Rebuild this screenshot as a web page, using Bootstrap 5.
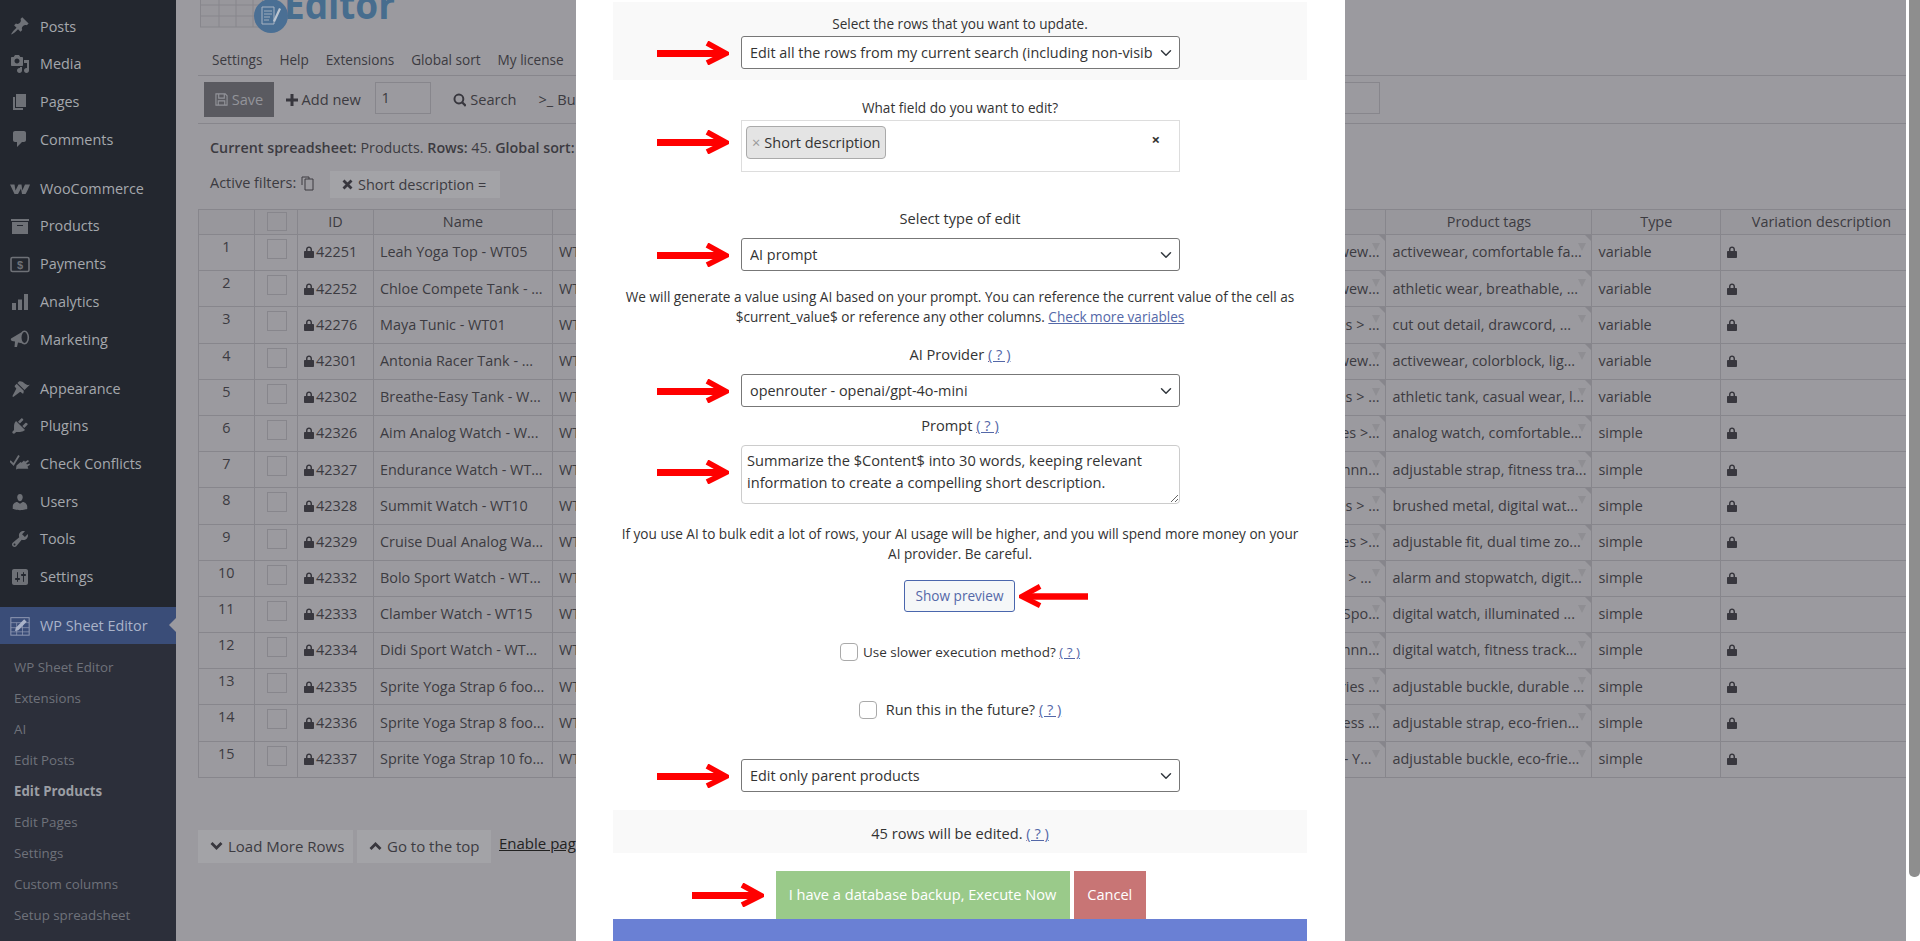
<!DOCTYPE html>
<html lang="en">
<head>
  <meta charset="UTF-8" />
  <title>WP Sheet Editor – Edit Products</title>
  <link href="https://cdn.jsdelivr.net/npm/bootstrap@5.3.0/dist/css/bootstrap.min.css" rel="stylesheet">
  <style>
    body { margin:0; overflow:hidden; font-family:"Open Sans",sans-serif; font-size:14px; color:#3c3b41; background:#fff; }
    .app-shell { height:941px; position:relative; overflow:hidden; }

    /* admin sidebar */
    .wp-side { width:176px; flex:none; background:#23272f; color:#a5a8ad; display:flex; flex-direction:column; }
    .wp-top { padding-top:7.5px; }
    .wp-item { height:37.7px; display:flex; align-items:center; font-size:14.4px; padding-left:10px; white-space:nowrap; }
    .wp-item svg { width:20px; height:20px; flex:none; margin-right:10px; fill:#6e7177; }
    .wp-gap { height:11.5px; }
    .wp-active { background:#3a4d78; color:#aab3c9; position:relative; height:37px; }
    .wp-active::after { content:""; position:absolute; right:0; top:11px; border:7px solid transparent; border-right-color:#9b9a9f; border-left:0; }
    .wp-sub { background:#2c2f3a; flex:1; padding-top:7.5px; }
    .wp-sub a { display:block; height:31px; line-height:31px; padding-left:14px; font-size:13.3px; color:#6f727a; text-decoration:none; }
    .wp-sub a.is-current { color:#9b9ea4; font-weight:700; }

    /* sheet page behind the modal */
    .sheet-page { flex:1; min-width:0; background:#9b9a9f; padding-left:22px; overflow:hidden; }
    .logo-strip { height:40px; display:block; }
    .sheet-menu { height:36px; border-bottom:1px solid #87868c; padding:6px 0 0 14px; gap:17px; display:flex; align-items:center; font-size:13.6px; }
    .sheet-tools { height:48px; border-bottom:1px solid #87868c; padding-left:6px; display:flex; align-items:flex-start; padding-top:6px; white-space:nowrap; font-size:14.6px; }
    .btn-save { width:70px; height:35px; background:#5a5a60; color:#93949a; gap:4px; }
    .btn-save svg { width:13px; height:13px; }
    .tool-link { height:35px; gap:4px; display:flex; align-items:center; flex:none; }
    .tool-add { width:77px; margin-left:11.5px; }
    .tool-search { width:64px; }
    .tool-bulk { width:100px; margin-left:22px; }
    .tool-num { width:56px; height:32px; border:1px solid #87868c; padding:0 6px; line-height:28px; margin:0 22px 0 12px; flex:none; }
    .tool-wide { width:412px; height:32px; border:1px solid #87868c; margin-left:329px; flex:none; }
    .sheet-meta { margin:14px 0 0 12px; height:20px; line-height:20px; white-space:nowrap; font-size:14.3px; }
    .sheet-filter { margin:13px 0 0 12px; height:27px; white-space:nowrap; font-size:14.5px; }
    .filter-copy { width:120px; flex:none; margin-top:-4px; }
    .filter-chip { width:170px; height:27px; background:#a3a3a7; padding-left:12px; gap:5px; flex:none; }
    .sheet-grid { margin-top:11px; width:1708px; table-layout:fixed; --bs-table-bg:transparent; --bs-table-color:#3c3b41; --bs-table-border-color:#87868c; margin-bottom:0; font-size:14.4px; }
    .sheet-grid th { font-weight:400; text-align:center; padding:0; height:25px; line-height:1; vertical-align:middle; background:#98979c; }
    .sheet-grid th.th-var { padding-left:16px; }
    .sheet-grid td { height:36.2px; padding:0 6px; vertical-align:middle; white-space:nowrap; overflow:hidden; position:relative; line-height:1; }
    .sheet-grid td.row-num { text-align:center; vertical-align:top; padding-top:5px; }
    .sheet-grid td.row-check { vertical-align:top; padding:4px 0 0 12px; }
    .fake-check { display:block; width:20px; height:20px; border:1px solid #87868c; }
    .sheet-grid th .fake-check { margin:-1px 0 0 12px; height:19px; }
    .lock { width:10px; height:12px; fill:#38373e; margin-right:2px; vertical-align:-1px; }
    .has-drop::before { content:""; position:absolute; top:0; right:0; border-top:6px solid #87868c; border-left:6px solid transparent; }
    .has-drop::after { content:""; position:absolute; top:8px; right:5px; border-top:8px solid #8f8e93; border-left:4.5px solid transparent; border-right:4.5px solid transparent; }
    .cat-cell { text-align:right; }
    .tail-short { padding-right:14px !important; }
    .sheet-foot { margin-top:52px; gap:4px; white-space:nowrap; font-size:15px; }
    .foot-btn { height:33px; background:#a3a3a7; padding-left:12px; gap:5px; }
    .foot-load { width:155px; }
    .foot-top { width:134px; }
    .foot-link { color:#222; text-decoration:underline; margin:-6px 0 0 4px; align-self:center; }
    .scroll-strip { width:14px; flex:none; padding-left:3px; background:#fff; }
    .scroll-thumb { height:877px; background:#8e8e8e; border-radius:0 0 5px 5px; }

    /* bulk edit modal */
    .edit-modal { position:absolute; left:576px; top:0; bottom:0; width:769px; background:#fff; padding:2px 38px 0 37px; overflow:hidden; color:#333; text-align:center; font-size:13.6px; line-height:20px; }
    .edit-modal a { color:#5468a8; }
    .text-big { font-size:14.6px; }
    .grey-panel { background:#f9f9f9; }
    .panel-top { height:78px; padding-top:12px; }
    .panel-count { height:43px; padding-top:13px; margin-top:18px; }
    .field-row { display:flex; align-items:center; padding-left:44px; gap:12px; text-align:left; }
    .red-arrow { width:72px; height:24px; flex:none; }
    .arrow-top { align-self:flex-start; margin-top:10px; }
    .arrow-up { margin-top:-6px; }
    .edit-modal .form-select { width:439px; height:33px; padding:0 26px 0 8px; font-size:14.4px; line-height:31px; color:#333; border-color:#777; border-radius:3px; background-position:right 5px center; box-shadow:none; }
    .select-multi { width:439px; height:52px; border:1px solid #ddd; padding:5px 4px; position:relative; }
    .multi-chip { width:140px; height:33px; background:#e4e4e4; border:1px solid #aaa; border-radius:4px; padding-left:5px; font-size:14.5px; gap:4px; color:#333; white-space:nowrap; }
    .multi-chip span { color:#999; }
    .multi-clear { position:absolute; right:19px; top:8px; font-weight:700; font-size:15px; }
    .prompt-box { width:439px; height:59px; font-size:14.6px; line-height:22px; padding:3px 5px; color:#333; border-color:#ccc; border-radius:4px; }
    .mt-18 { margin-top:18px; } .mt-36 { margin-top:36px; } .mt-10 { margin-top:10px; } .mt-2px { margin-top:2px; }
    .mt-16 { margin-top:16px; } .mt-17 { margin-top:17px; } .mt-8 { margin-top:8px; }
    .mt-20 { margin-top:20px; } .mt-30 { margin-top:30px; } .mt-38 { margin-top:38px; } .mt-39 { margin-top:39px; }
    .preview-row { display:flex; align-items:center; padding-left:291px; gap:4px; }
    .btn-preview { width:111px; height:32px; padding:0; font-size:13.6px; color:#5468a8; background:#f5f7f8; border:1px solid #4a66ad; border-radius:3px; flex:none; }
    .preview-row .red-arrow { width:69px; transform:scaleX(-1); }
    .check-line { display:flex; align-items:center; height:20px; justify-content:center; }
    .check-line .form-check-input { width:18px; height:18px; margin:0; border-color:#aaa; border-radius:4px; flex:none; }
    .line-a { gap:5px; font-size:13.5px; }
    .line-b { gap:9px; font-size:14.5px; }
    .action-row { display:flex; padding-left:78.5px; gap:12px; margin-top:18px; align-items:center; height:48px; }
    .action-row .btn { height:48px; border:0; border-radius:0; color:#fff; font-size:14.6px; padding:0; flex:none; }
    .btn-run { width:294px; background:#9aca8a; margin-right:-7.5px; }
    .btn-stop { width:71.500px; background:#c87575; }
    .blue-foot { height:30px; background:#6a80d4; }
  </style>
</head>
<body>
  <svg width="0" height="0" class="position-absolute">
    <symbol id="i-lock" viewBox="0 0 10 12"><path d="M2 5V3.400C2 1.600 3.300.5 5 .5s3 1.100 3 2.900V5h1.200c.4 0 .8.4.8.8v5.400c0 .4-.4.8-.8.8H.8c-.4 0-.8-.4-.8-.8V5.800c0-.4.4-.8.8-.8zm1.500 0h3V3.500C6.500 2.500 5.900 2 5 2s-1.500.5-1.500 1.500z"/></symbol>
    <symbol id="i-arrow" viewBox="0 0 72 24"><path d="M0 9h64v7H0z" fill="#f00"/><path d="M50 2l19 10.500L50 22" fill="none" stroke="#f00" stroke-width="5.500"/></symbol>
  </svg>

  <div class="app-shell d-flex">
    <aside class="wp-side">
      <div class="wp-top">
        <div class="wp-item"><svg viewBox="0 0 20 20"><path d="M10.44 3.02l1.82-1.82 6.36 6.35-1.830 1.820c-1.050-.68-2.480-.57-3.410.36l-.75.75c-.92.93-1.040 2.350-.35 3.410l-1.830 1.820-2.410-2.410-2.800 2.790c-.42.42-3.380 2.710-3.800 2.290s1.860-3.390 2.280-3.810l2.790-2.790L4.100 9.360l1.830-1.820c1.050.69 2.480.57 3.400-.36l.75-.75c.93-.92 1.050-2.350.36-3.410z"/></svg>Posts</div>
        <div class="wp-item"><svg viewBox="0 0 20 20"><path d="M13 11V4c0-.55-.45-1-1-1h-1.670L9 1H5L3.670 3H2c-.55 0-1 .45-1 1v7c0 .55.45 1 1 1h10c.55 0 1-.45 1-1zM7 4.500c1.380 0 2.500 1.120 2.500 2.500S8.380 9.500 7 9.500 4.500 8.380 4.500 7 5.620 4.500 7 4.500zM14 6h5v10.500c0 1.380-1.120 2.500-2.500 2.500S14 17.880 14 16.500s1.120-2.500 2.500-2.500c.17 0 .34.02.5.05V9h-3V6zm-4 8.050V13h2v3.500c0 1.380-1.120 2.500-2.500 2.500S7 17.880 7 16.500 8.120 14 9.500 14c.17 0 .34.02.5.05z"/></svg>Media</div>
        <div class="wp-item"><svg viewBox="0 0 20 20"><path d="M6 15V2h10v13H6zm-1 1h8v2H3V5h2v11z"/></svg>Pages</div>
        <div class="wp-item"><svg viewBox="0 0 20 20"><path d="M5 2h9c1.100 0 2 .9 2 2v7c0 1.100-.9 2-2 2h-2l-5 5v-5H5c-1.100 0-2-.9-2-2V4c0-1.100.9-2 2-2z"/></svg>Comments</div>
      </div>
      <div class="wp-gap"></div>
      <div class="wp-item"><svg viewBox="0 0 20 20"><path d="M0 5.500h4.500l1 6 3-6h3l.8 6 2.700-6H20c-1 3-3.500 8.500-4.500 9.500h-3.500l-1-5.500L8 15H4.500z"/></svg>WooCommerce</div>
      <div class="wp-item"><svg viewBox="0 0 20 20"><path d="M19 3v2H1V3h18zM2 6h16v12H2V6zm11 4V9H7v1h6z"/></svg>Products</div>
      <div class="wp-item"><svg viewBox="0 0 20 20"><rect x="1" y="3.500" width="18" height="14" rx="1.500" fill="none" stroke="#6e7177" stroke-width="1.600"/><text x="10" y="15" text-anchor="middle" font-family="Liberation Sans" font-weight="700" font-size="11">$</text></svg>Payments</div>
      <div class="wp-item"><svg viewBox="0 0 20 20"><path d="M2 11h4v7H2zM8 7.500h4V18H8zM14 2h4v16h-4z"/></svg>Analytics</div>
      <div class="wp-item"><svg viewBox="0 0 20 20"><path d="M1 9.500l11-6.500c-1.500 2.500-1.500 9 1 11.500l-5-1-1 4.500H4.500l.5-5.500-3-.5c-1-.5-1.500-1.500-1-2.500z"/><ellipse cx="14.500" cy="8.500" rx="3.800" ry="6.300" fill="none" stroke="#6e7177" stroke-width="1.600"/></svg>Marketing</div>
      <div class="wp-gap"></div>
      <div class="wp-item"><svg viewBox="0 0 20 20"><path d="M14.480 11.060L7.410 3.990l1.500-1.500c.5-.56 2.300-.47 3.510.32 1.210.8 1.430 1.280 2.910 2.100 1.180.64 2.450 1.260 4.450.85zm-.71.71L6.700 4.700 4.930 6.470c-.39.39-.39 1.020 0 1.410l1.060 1.060c.39.39.39 1.030 0 1.420l-3.400 6.500c-.4.800.4 1.300 1 .9l6-4.500c.39-.39 1.030-.39 1.420 0l1.060 1.060c.39.39 1.020.39 1.410 0z"/></svg>Appearance</div>
      <div class="wp-item"><svg viewBox="0 0 20 20"><path d="M13.110 4.360L9.870 7.600 8 5.730l3.240-3.240c.35-.34 1.050-.2 1.560.32.52.51.66 1.210.31 1.550zm-8 1.770l.91-1.120 9.010 9.010-1.190.84c-.71.71-2.630 1.160-3.820 1.160H6.140L4.900 17.260c-.59.59-1.540.59-2.120 0-.59-.58-.59-1.530 0-2.120l1.240-1.240v-3.880c0-1.130.4-3.190 1.090-3.890zm7.260 3.970l3.240-3.240c.34-.35 1.040-.21 1.550.31.52.51.66 1.210.31 1.550l-3.240 3.250z"/></svg>Plugins</div>
      <div class="wp-item"><svg viewBox="0 0 20 20"><path d="M6 15.500l.5-4 4-3.500 1 .8 2.500-2.300 1 1.200 3-1.800 1 1.400-2.800 2.200.8 1 2.500-1 .5 1.200-2.500 1.800.8 2.300H8z"/><path d="M0 7l3.500 3.500L9 1.500" fill="none" stroke="#6e7177" stroke-width="1.800"/></svg>Check Conflicts</div>
      <div class="wp-item"><svg viewBox="0 0 20 20"><path d="M10 9.250c-2.270 0-2.730-3.440-2.730-3.440C7 4.020 7.820 2 9.970 2c2.160 0 2.980 2.020 2.710 3.810 0 0-.41 3.440-2.680 3.440zm0 2.570L12.720 10c2.390 0 4.520 2.330 4.520 4.530v2.490s-3.650 1.130-7.240 1.130c-3.650 0-7.240-1.130-7.240-1.130v-2.490c0-2.250 1.940-4.480 4.470-4.480z"/></svg>Users</div>
      <div class="wp-item"><svg viewBox="0 0 20 20"><path d="M16.680 9.770c-1.340 1.340-3.300 1.670-4.950.99l-5.410 6.520c-.99.99-2.590.99-3.580 0s-.99-2.590 0-3.570l6.520-5.420c-.68-1.650-.35-3.610.99-4.950 1.280-1.280 3.120-1.620 4.720-1.060l-2.890 2.890 2.820 2.820 2.860-2.870c.53 1.580.18 3.390-1.080 4.650zM3.810 16.210c.4.39 1.040.39 1.430 0 .4-.4.4-1.040 0-1.430-.39-.4-1.030-.4-1.430 0-.39.39-.39 1.030 0 1.430z"/></svg>Tools</div>
      <div class="wp-item"><svg viewBox="0 0 20 20"><path d="M18 16V4c0-1.100-.9-2-2-2H4c-1.100 0-2 .9-2 2v12c0 1.100.9 2 2 2h12c1.100 0 2-.9 2-2zM8 11h1c.55 0 1 .45 1 1s-.45 1-1 1H8v1.500c0 .28-.22.5-.5.5s-.5-.22-.5-.5V13H6c-.55 0-1-.45-1-1s.45-1 1-1h1V5.500c0-.28.22-.5.5-.5s.5.22.5.5V11zm5-2h-1c-.55 0-1-.45-1-1s.45-1 1-1h1V5.500c0-.28.22-.5.5-.5s.5.22.5.5V7h1c.55 0 1 .45 1 1s-.45 1-1 1h-1v5.500c0 .28-.22.5-.5.5s-.5-.22-.5-.5V9z"/></svg>Settings</div>
      <div class="wp-gap"></div>
      <div class="wp-item wp-active"><svg viewBox="0 0 24 24"><rect x="1" y="2" width="22" height="21" fill="none" stroke="#8f99b3" stroke-width="1.200"/><path d="M1 8h22M1 14h22M1 19h22M8 8v15M15 8v15" stroke="#8f99b3" stroke-width=".9" fill="none"/><path d="M6 18l1-4 10-10 3 3-10 10z" fill="#aab3c9"/></svg>WP Sheet Editor</div>
      <nav class="wp-sub">
        <a href="#">WP Sheet Editor</a>
        <a href="#">Extensions</a>
        <a href="#">AI</a>
        <a href="#">Edit Posts</a>
        <a href="#" class="is-current">Edit Products</a>
        <a href="#">Edit Pages</a>
        <a href="#">Settings</a>
        <a href="#">Custom columns</a>
        <a href="#">Setup spreadsheet</a>
      </nav>
    </aside>

    <main class="sheet-page">
      <svg class="logo-strip" width="220" height="40" viewBox="0 0 220 40">
        <rect x="2.500" y="-6" width="62" height="33" fill="#98979c" stroke="#87868c"/>
        <path d="M2 5h62M2 16h62M21 -6v33M38 -6v33M55 -6v33" stroke="#87868c" fill="none"/>
        <text x="86" y="19" font-family="Open Sans" font-weight="700" font-size="39" fill="#476d8e" textLength="111" lengthAdjust="spacingAndGlyphs">Editor</text>
        <circle cx="73" cy="16" r="17" fill="#4a6f94"/>
        <path d="M64 7h12v17H64z" fill="none" stroke="#a8b4c2" stroke-width="1"/>
        <path d="M66 11h8M66 14h8M66 17h6M66 20h5" stroke="#a8b4c2" stroke-width=".9"/>
        <path d="M75 21l6-13 2 1-6 13z" fill="#bcc5d0"/>
      </svg>
      <div class="sheet-menu"><span>Settings</span><span>Help</span><span>Extensions</span><span>Global sort</span><span>My license</span></div>
      <div class="sheet-tools">
        <div class="btn-save d-flex align-items-center justify-content-center"><svg viewBox="0 0 14 14"><path d="M1 1h10l2 2v10H1zM4 1.500v4h6v-4M3.500 13V8.500h7V13" fill="none" stroke="#93949a" stroke-width="1.200"/></svg>Save</div>
        <div class="tool-link tool-add"><svg width="12" height="12" viewBox="0 0 12 12"><path d="M4.500 0h3v4.500H12v3H7.500V12h-3V7.500H0v-3h4.500z" fill="#38373e"/></svg>Add new</div>
        <div class="tool-num">1</div>
        <div class="tool-link tool-search"><svg width="14" height="14" viewBox="0 0 14 14"><circle cx="6" cy="6" r="4.500" fill="none" stroke="#38373e" stroke-width="2"/><path d="M9.500 9.500L13 13" stroke="#38373e" stroke-width="2.400"/></svg>Search</div>
        <div class="tool-link tool-bulk"><span>&gt;_</span> Bulk Edit</div>
        <div class="tool-wide"></div>
      </div>
      <div class="sheet-meta"><b class="fw-semibold">Current spreadsheet:</b> Products. <b class="fw-semibold">Rows:</b> 45. <b class="fw-semibold">Global sort:</b> None</div>
      <div class="sheet-filter d-flex align-items-center">
        <span class="filter-copy">Active filters: <svg width="15" height="15" viewBox="0 0 15 15"><path d="M5 3h8v11H5zM2 9V1h7v2" fill="none" stroke="#3c3b41"/></svg></span>
        <span class="filter-chip d-flex align-items-center"><svg width="11" height="11" viewBox="0 0 11 11"><path d="M1.500 1.500l8 8M9.500 1.500l-8 8" stroke="#38373e" stroke-width="2.800"/></svg>Short description =</span>
      </div>
      <table class="table table-bordered sheet-grid">
        <colgroup>
          <col style="width:55.600px"><col style="width:43.400px"><col style="width:76px"><col style="width:179px"><col style="width:300px"><col style="width:533.500px"><col style="width:206px"><col style="width:128.500px"><col style="width:186px">
        </colgroup>
        <thead>
          <tr><th></th><th><span class="fake-check"></span></th><th>ID</th><th>Name</th><th>SKU</th><th>Categories</th><th>Product tags</th><th>Type</th><th class="th-var">Variation description</th></tr>
        </thead>
        <tbody id="sheet-rows"></tbody>
      </table>
      <div class="sheet-foot d-flex">
        <div class="foot-btn foot-load d-flex align-items-center"><svg width="13" height="10" viewBox="0 0 13 10"><path d="M1.500 2l5 5 5-5" fill="none" stroke="#38373e" stroke-width="2.800"/></svg>Load More Rows</div>
        <div class="foot-btn foot-top d-flex align-items-center"><svg width="13" height="10" viewBox="0 0 13 10"><path d="M1.500 8l5-5 5 5" fill="none" stroke="#38373e" stroke-width="2.800"/></svg>Go to the top</div>
        <a class="foot-link" href="#">Enable pagination</a>
      </div>
    </main>
    <div class="scroll-strip"><div class="scroll-thumb"></div></div>

    <section class="edit-modal">
      <div class="grey-panel panel-top">
        <div>Select the rows that you want to update.</div>
        <div class="field-row mt-2px">
          <svg class="red-arrow"><use href="#i-arrow"/></svg>
          <select class="form-select"><option>Edit all the rows from my current search (including non-visible rows).</option></select>
        </div>
      </div>

      <div class="mt-18">What field do you want to edit?</div>
      <div class="field-row mt-2px">
        <svg class="red-arrow arrow-top"><use href="#i-arrow"/></svg>
        <div class="select-multi">
          <div class="multi-chip d-flex align-items-center"><span>×</span>Short description</div>
          <div class="multi-clear">×</div>
        </div>
      </div>

      <div class="mt-36 text-big">Select type of edit</div>
      <div class="field-row mt-10">
        <svg class="red-arrow"><use href="#i-arrow"/></svg>
        <select class="form-select"><option>AI prompt</option></select>
      </div>

      <div class="mt-16">We will generate a value using AI based on your prompt. You can reference the current value of the cell as<br>$current_value$ or reference any other columns. <a href="#">Check more variables</a></div>

      <div class="mt-17 text-big">AI Provider <a href="#">( ? )</a></div>
      <div class="field-row mt-10">
        <svg class="red-arrow"><use href="#i-arrow"/></svg>
        <select class="form-select"><option>openrouter - openai/gpt-4o-mini</option></select>
      </div>

      <div class="mt-8 text-big">Prompt <a href="#">( ? )</a></div>
      <div class="field-row mt-10">
        <svg class="red-arrow arrow-up"><use href="#i-arrow"/></svg>
        <textarea class="form-control prompt-box">Summarize the $Content$ into 30 words, keeping relevant information to create a compelling short description.</textarea>
      </div>

      <div class="mt-20">If you use AI to bulk edit a lot of rows, your AI usage will be higher, and you will spend more money on your<br>AI provider. Be careful.</div>

      <div class="preview-row mt-16">
        <button class="btn btn-preview">Show preview</button>
        <svg class="red-arrow"><use href="#i-arrow"/></svg>
      </div>

      <div class="check-line line-a mt-30"><input class="form-check-input" type="checkbox"><span>Use slower execution method? <a href="#">( ? )</a></span></div>
      <div class="check-line line-b mt-38"><input class="form-check-input" type="checkbox"><span>Run this in the future? <a href="#">( ? )</a></span></div>

      <div class="field-row mt-39">
        <svg class="red-arrow"><use href="#i-arrow"/></svg>
        <select class="form-select"><option>Edit only parent products</option></select>
      </div>

      <div class="grey-panel panel-count text-big">45 rows will be edited. <a href="#">( ? )</a></div>

      <div class="action-row">
        <svg class="red-arrow"><use href="#i-arrow"/></svg>
        <button class="btn btn-run">I have a database backup, Execute Now</button>
        <button class="btn btn-stop">Cancel</button>
      </div>
      <div class="blue-foot"></div>
    </section>
  </div>

  <script src="https://cdn.jsdelivr.net/npm/bootstrap@5.3.0/dist/js/bootstrap.bundle.min.js"></script>
  <script>
    // id, name, sku, end of the categories cell, tags, type
    const rows = [
      [42251, 'Leah Yoga Top - WT05', 'WT05', 'Activewew...', 'activewear, comfortable fa...', 'variable'],
      [42252, 'Chloe Compete Tank - ...', 'WT06', 'Activewew...', 'athletic wear, breathable, ...', 'variable'],
      [42276, 'Maya Tunic - WT01', 'WT01', 'Tops &gt; ...', 'cut out detail, drawcord, ...', 'variable'],
      [42301, 'Antonia Racer Tank - ...', 'WT02', 'Activewew...', 'activewear, colorblock, lig...', 'variable'],
      [42302, 'Breathe-Easy Tank - W...', 'WT03', 'Tops &gt; ...', 'athletic tank, casual wear, l...', 'variable'],
      [42326, 'Aim Analog Watch - W...', 'WT07', 'Watches &gt;...', 'analog watch, comfortable...', 'simple'],
      [42327, 'Endurance Watch - WT...', 'WT08', 'Technn...', 'adjustable strap, fitness tra...', 'simple'],
      [42328, 'Summit Watch - WT10', 'WT10', 'Watches &gt; ...', 'brushed metal, digital wat...', 'simple'],
      [42329, 'Cruise Dual Analog Wa...', 'WT11', 'Watches &gt;...', 'adjustable fit, dual time zo...', 'simple'],
      [42332, 'Bolo Sport Watch - WT...', 'WT12', 'Gear &gt; ...', 'alarm and stopwatch, digit...', 'simple', 1],
      [42333, 'Clamber Watch - WT15', 'WT15', 'Spo...', 'digital watch, illuminated ...', 'simple'],
      [42334, 'Didi Sport Watch - WT...', 'WT16', 'Technn...', 'digital watch, fitness track...', 'simple'],
      [42335, 'Sprite Yoga Strap 6 foo...', 'WT17', 'Accessories ...', 'adjustable buckle, durable ...', 'simple'],
      [42336, 'Sprite Yoga Strap 8 foo...', 'WT18', 'Fitness ...', 'adjustable strap, eco-frien...', 'simple'],
      [42337, 'Sprite Yoga Strap 10 fo...', 'WT19', 'Gear - Y...', 'adjustable buckle, eco-frie...', 'simple', 1]
    ];
    const lock = '<svg class="lock"><use href="#i-lock"/></svg>';
    document.getElementById('sheet-rows').innerHTML = rows.map((r, i) => `
      <tr>
        <td class="row-num">${i + 1}</td>
        <td class="row-check"><span class="fake-check"></span></td>
        <td>${lock}${r[0]}</td>
        <td>${r[1]}</td>
        <td>${r[2]}</td>
        <td class="cat-cell has-drop ${r[6] ? 'tail-short' : ''}">${r[3]}</td>
        <td class="has-drop">${r[4]}</td>
        <td>${r[5]}</td>
        <td>${lock}</td>
      </tr>`).join('');
  </script>
</body>
</html>
